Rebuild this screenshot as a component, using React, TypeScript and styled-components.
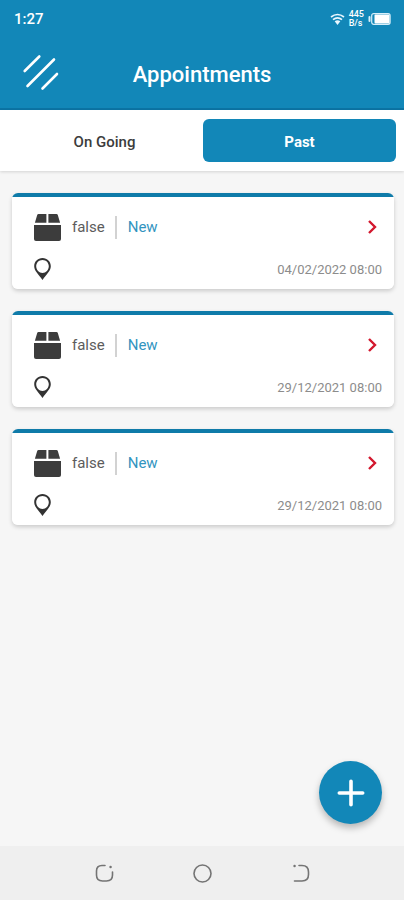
import React, { useState } from "react";
import styled, { createGlobalStyle } from "styled-components";

const blue = "#1287b8";

const GlobalStyle = createGlobalStyle`
  *, *::before, *::after { box-sizing: border-box; }
  body { margin: 0; font-family: Roboto, "Liberation Sans", sans-serif; background: #f6f6f6; }
  button { font: inherit; border: 0; padding: 0; background: none; cursor: pointer; }
  svg { display: block; flex: none; }
`;

const Screen = styled.div`
  display: flex;
  flex-direction: column;
  min-height: 100vh;
  background: #f6f6f6;
`;

const Header = styled.header`
  background: ${blue};
  color: #fff;
  border-bottom: 2px solid #0c74a4;
`;

const StatusBar = styled.div`
  display: flex;
  align-items: center;
  justify-content: space-between;
  height: 38px;
  padding: 0 13px 0 14px;
`;

const Clock = styled.span`
  font-size: 15px;
  font-weight: 500;
`;

const StatusIcons = styled.div`
  display: flex;
  align-items: center;
  gap: 4px;
`;

const NetSpeed = styled.span`
  font-size: 9px;
  line-height: 9px;
  font-weight: 500;
  text-align: left;
`;

const TitleBar = styled.div`
  display: grid;
  grid-template-columns: 40px 1fr 40px;
  align-items: center;
  height: 70px;
  padding: 0 20px;
`;

const MenuButton = styled.button`
  color: #fff;
`;

const Title = styled.h1`
  margin: 0;
  padding-top: 3px;
  font-size: 22px;
  line-height: 28px;
  font-weight: 500;
  text-align: center;
`;

const Tabs = styled.div`
  display: grid;
  grid-template-columns: 1fr 1fr;
  gap: 2px;
  padding: 9px 8px;
  background: #fff;
  box-shadow: 0 1px 3px rgba(0, 0, 0, 0.14);
`;

const Tab = styled.button<{ $active: boolean }>`
  height: 43px;
  border-radius: 6px;
  && {
    padding-top: 2px;
    font-size: 15px;
    font-weight: ${(p) => (p.$active ? 700 : 500)};
    color: ${(p) => (p.$active ? "#fff" : "#3c3c3c")};
    background: ${(p) => (p.$active ? blue : "transparent")};
  }
`;

const List = styled.main`
  display: flex;
  flex: 1;
  flex-direction: column;
  gap: 22px;
  padding: 22px 10px 96px 12px;
`;

const Card = styled.article`
  display: flex;
  flex-direction: column;
  justify-content: space-between;
  height: 96px;
  padding: 20px 12px 9px 21px;
  border-radius: 6px;
  background: linear-gradient(#0f7ba9 0 4px, #fff 4px);
  box-shadow: 0 2px 4px rgba(0, 0, 0, 0.18);
`;

const CardRow = styled.div`
  display: flex;
  align-items: center;
  min-height: 22px;
`;

const Name = styled.span`
  margin-left: 11px;
  padding-right: 10px;
  border-right: 2px solid #d2d2d2;
  font-size: 15px;
  line-height: 23px;
  color: #5c5c5c;
`;

const Status = styled.span`
  flex: 1;
  margin-left: 11px;
  font-size: 15px;
  color: #3294bf;
`;

const OpenButton = styled.button`
  margin-right: 4px;
`;

const DateText = styled.time`
  margin-left: auto;
  font-size: 13px;
  color: #8c8c8c;
`;

const AddButton = styled.button`
  position: fixed;
  right: 22px;
  bottom: 76px;
  display: grid;
  place-items: center;
  width: 63px;
  height: 63px;
  && { background: ${blue}; }
  border-radius: 50%;
  box-shadow: 0 4px 7px rgba(0, 0, 0, 0.26);
`;

const NavBar = styled.nav`
  display: flex;
  align-items: center;
  justify-content: center;
  gap: 74px;
  height: 54px;
  background: #efefef;
`;

const NavButton = styled.button`
  display: grid;
  place-items: center;
  width: 24px;
  height: 24px;
`;

const WifiIcon = () => (
  <svg width="15" height="13" viewBox="0 0 15 13" fill="none" stroke="#e9f7ff" strokeWidth="1.7" aria-hidden="true">
    <path d="M1 4Q7.5-1 14 4" />
    <path d="M3 6.7Q7.5 3.2 12 6.7" />
    <path d="M4.7 8.2Q7.5 6.2 10.3 8.2L7.5 12Z" fill="#e9f7ff" stroke="none" />
  </svg>
);

const BatteryIcon = () => (
  <svg width="23" height="12" viewBox="0 0 23 12" aria-hidden="true">
    <path d="M1.5 4v4" stroke="#d8effa" strokeWidth="2" strokeLinecap="round" />
    <rect x="3.7" y=".7" width="18.4" height="10.6" rx="2" fill="none" stroke="#d8effa" strokeWidth="1.2" />
    <rect x="6.500" y="1.500" width="15" height="9" rx="1" fill="#fff" />
  </svg>
);

const MenuIcon = () => (
  <svg width="40" height="40" viewBox="0 0 40 40" fill="none" stroke="#fff" strokeWidth="2.6" strokeLinecap="round" aria-hidden="true">
    <path d="M4.7 18 19.3 3.500M7.500 33 34 6.500M22.500 35.500 37 21" />
  </svg>
);

const BoxIcon = () => (
  <svg width="28" height="28" viewBox="0 0 28 28" fill="#3c3c3c" aria-hidden="true">
    <path d="M5.500 1H13.400v8.800H1.900L4.200 2Q4.500 1 5.500 1ZM15.400 1h8.100q1 0 1.300 1l2.300 7.800H15.400Z" />
    <path d="M1 12h27v14q0 2-2 2H3q-2 0-2-2Z" />
  </svg>
);

const PinIcon = () => (
  <svg width="18" height="22" viewBox="0 0 18 22" aria-hidden="true">
    <path
      fill="#333"
      fillRule="evenodd"
      d="M9.500 0C4.700 0 1.200 3.600 1.200 8.300C1.200 13.100 5.800 16.500 9.500 22C13.200 16.500 17.800 13.100 17.800 8.300C17.800 3.600 14.300 0 9.500 0ZM9.500 1.900C13.200 1.900 15.800 4.700 15.800 8.300C15.800 12 13 15 9.500 15C6 15 3.200 12 3.200 8.300C3.200 4.700 5.800 1.900 9.500 1.900Z"
    />
  </svg>
);

const ChevronIcon = () => (
  <svg width="10" height="16" viewBox="0 0 10 16" fill="none" stroke="#d3182e" strokeWidth="2.4" aria-hidden="true">
    <path d="m1 2 6 6-6 6" />
  </svg>
);

const PlusIcon = () => (
  <svg width="28" height="28" viewBox="0 0 28 28" fill="none" stroke="#fff" strokeWidth="3.6" strokeLinecap="round" aria-hidden="true">
    <path d="M14 2.300v23.400M2.300 14h23.400" />
  </svg>
);

const NavIcon = ({ children }: { children: React.ReactNode }) => (
  <svg width="20" height="20" viewBox="0 0 20 20" fill="none" stroke="#747474" strokeWidth="1.600" strokeLinecap="round" aria-hidden="true">
    {children}
  </svg>
);

type Appointment = { id: number; name: string; status: string; date: string };

const appointments: Appointment[] = [
  { id: 1, name: "false", status: "New", date: "04/02/2022 08:00" },
  { id: 2, name: "false", status: "New", date: "29/12/2021 08:00" },
  { id: 3, name: "false", status: "New", date: "29/12/2021 08:00" },
];

const tabs = ["On Going", "Past"];

export default function App() {
  const [active, setActive] = useState("Past");
  return (
    <>
      <GlobalStyle />
      <Screen>
        <Header>
          <StatusBar>
            <Clock>1:27</Clock>
            <StatusIcons>
              <WifiIcon />
              <NetSpeed>445<br />B/s</NetSpeed>
              <BatteryIcon />
            </StatusIcons>
          </StatusBar>
          <TitleBar>
            <MenuButton aria-label="Menu"><MenuIcon /></MenuButton>
            <Title>Appointments</Title>
          </TitleBar>
        </Header>
        <Tabs role="tablist">
          {tabs.map((tab) => (
            <Tab key={tab} role="tab" aria-selected={tab === active} $active={tab === active} onClick={() => setActive(tab)}>
              {tab}
            </Tab>
          ))}
        </Tabs>
        <List>
          {appointments.map((item) => (
            <Card key={item.id}>
              <CardRow>
                <BoxIcon />
                <Name>{item.name}</Name>
                <Status>{item.status}</Status>
                <OpenButton aria-label="Open appointment"><ChevronIcon /></OpenButton>
              </CardRow>
              <CardRow>
                <PinIcon />
                <DateText>{item.date}</DateText>
              </CardRow>
            </Card>
          ))}
        </List>
        <AddButton aria-label="Add appointment"><PlusIcon /></AddButton>
        <NavBar aria-label="System">
          <NavButton aria-label="Recent apps">
            <NavIcon>
              <path d="M11 2.500H8Q2.500 2.500 2.500 8v4q0 6 6 6h4q6 0 6-6V9" />
              <path d="M16.500 4h.1" strokeWidth="2.400" />
            </NavIcon>
          </NavButton>
          <NavButton aria-label="Home">
            <NavIcon><circle cx="10.500" cy="10.500" r="8.500" /></NavIcon>
          </NavButton>
          <NavButton aria-label="Back">
            <NavIcon>
              <path d="M9 2.500H12q6.500 0 6.500 6.500v2.500q0 6.500-6.500 6.500H4.500" />
              <path d="M4.500 3h.1" strokeWidth="2.400" />
            </NavIcon>
          </NavButton>
        </NavBar>
      </Screen>
    </>
  );
}
